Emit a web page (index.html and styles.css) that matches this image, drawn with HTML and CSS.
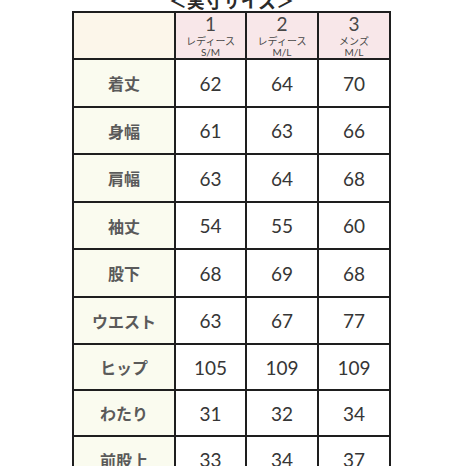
FILE: index.html
```html
<!DOCTYPE html>
<html lang="ja">
<head>
<meta charset="utf-8">
<title>実寸サイズ</title>
<link rel="stylesheet" href="styles.css">
</head>
<body>
<div class="page">
  <div class="title">＜実寸サイズ＞</div>
  <div class="chart">
    <div class="cell corner"></div>
    <div class="cell size"><span class="num">1</span><span class="kind">レディース</span><span class="fit">S/M</span></div>
    <div class="cell size"><span class="num">2</span><span class="kind">レディース</span><span class="fit">M/L</span></div>
    <div class="cell size"><span class="num">3</span><span class="kind">メンズ</span><span class="fit">M/L</span></div>

    <div class="cell label">着丈</div><div class="cell val">62</div><div class="cell val">64</div><div class="cell val">70</div>
    <div class="cell label">身幅</div><div class="cell val">61</div><div class="cell val">63</div><div class="cell val">66</div>
    <div class="cell label">肩幅</div><div class="cell val">63</div><div class="cell val">64</div><div class="cell val">68</div>
    <div class="cell label">袖丈</div><div class="cell val">54</div><div class="cell val">55</div><div class="cell val">60</div>
    <div class="cell label">股下</div><div class="cell val">68</div><div class="cell val">69</div><div class="cell val">68</div>
    <div class="cell label">ウエスト</div><div class="cell val">63</div><div class="cell val">67</div><div class="cell val">77</div>
    <div class="cell label">ヒップ</div><div class="cell val">105</div><div class="cell val">109</div><div class="cell val">109</div>
    <div class="cell label">わたり</div><div class="cell val">31</div><div class="cell val">32</div><div class="cell val">34</div>
    <div class="cell label">前股上</div><div class="cell val">33</div><div class="cell val">34</div><div class="cell val">37</div>
  </div>
</div>
</body>
</html>
```
FILE: styles.css
```css
html, body {
  margin: 0;
  padding: 0;
  background: #ffffff;
  overflow: hidden;
  height: 466px;
}

.page {
  padding-left: 72px;
  width: 319px;
  font-family: "Noto Sans CJK JP", "Noto Sans", sans-serif;
}

.title {
  height: 22px;
  margin-top: -11px;
  font-size: 18px;
  line-height: 22px;
  font-weight: 700;
  color: #2a2a2a;
  text-align: center;
  white-space: nowrap;
}

.chart {
  display: grid;
  grid-template-columns: 100px 69px 70px 70px;
  grid-template-rows: 45px 46px 45px 46px 45px 46px 45px 44px 44px 45px;
  gap: 2px;
  padding: 2px;
  background: #1e1e1e;
}

.cell {
  display: flex;
  align-items: center;
  justify-content: center;
  background: #ffffff;
}

.corner {
  background: #fcf6ea;
}

.size {
  background: #f8e7e9;
  flex-direction: column;
  justify-content: flex-start;
  color: #474747;
}

.num {
  font-family: Lato, "Noto Sans", sans-serif;
  font-size: 19px;
  line-height: 19px;
  margin-top: 1px;
}

.kind {
  font-size: 10px;
  line-height: 13px;
  margin-top: 1px;
}

.fit {
  font-family: Lato, "Noto Sans", sans-serif;
  font-size: 10px;
  line-height: 11px;
}

.label {
  background: #fafbef;
  color: #5a5a5a;
  font-size: 16px;
  font-weight: 700;
}

.val {
  font-family: Lato, "Noto Sans", sans-serif;
  color: #363636;
  font-size: 19px;
}
```
